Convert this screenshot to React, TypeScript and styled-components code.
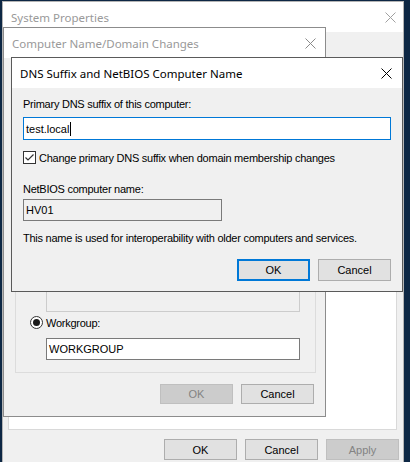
import styled, { createGlobalStyle } from "styled-components";

const GlobalStyle = createGlobalStyle`
  html, body {
    margin: 0;
    padding: 0;
  }
  body {
    font-family: "Liberation Sans", Arial, sans-serif;
    font-size: 11px;
    color: #000;
  }
`

const Desktop = styled.div`
  position: relative;
  width: 410px;
  height: 462px;
  overflow: hidden;
  background: #0d2744;
`

// windows sit on the desktop at their own coordinates
const Window = styled.div<{ $x: number; $y: number; $w: number; $h: number; $border: string }>`
  position: absolute;
  left: ${(p) => p.$x}px;
  top: ${(p) => p.$y}px;
  width: ${(p) => p.$w}px;
  height: ${(p) => p.$h}px;
  box-sizing: border-box;
  border: 1px solid ${(p) => p.$border};
  background: #f0f0f0;
  display: flex;
  flex-direction: column;
`

const TitleBar = styled.div<{ $active?: boolean }>`
  flex: none;
  height: 30px;
  background: #fff;
  display: flex;
  align-items: center;
  justify-content: space-between;
  padding-left: 8px;
  font-family: "Noto Sans", "Open Sans", sans-serif;
  font-size: 11.5px;
  color: ${(p) => (p.$active ? "#000" : "#999")};
`

const CloseBox = styled.div<{ $inset: number }>`
  width: ${(p) => p.$inset * 2}px;
  height: 30px;
  display: flex;
  align-items: center;
  justify-content: center;
`

const Body = styled.div<{ $end?: boolean }>`
  flex: 1;
  display: flex;
  flex-direction: column;
  justify-content: ${(p) => (p.$end ? "flex-end" : "flex-start")};
  min-height: 0;
`

const Label = styled.div<{ $top?: number }>`
  line-height: 13px;
  margin-top: ${(p) => p.$top ?? 0}px;
  letter-spacing: -0.25px;
  white-space: nowrap;
`

const Field = styled.div<{ $w?: number; $h: number; $top?: number; $left?: number; $border: string; $bg: string }>`
  box-sizing: border-box;
  width: ${(p) => (p.$w ? `${p.$w}px` : "auto")};
  height: ${(p) => p.$h}px;
  margin-top: ${(p) => p.$top ?? 0}px;
  margin-left: ${(p) => p.$left ?? 0}px;
  border: 1px solid ${(p) => p.$border};
  background: ${(p) => p.$bg};
  display: flex;
  align-items: center;
  padding: 0 2px;
  font-size: 11px;
`

const Caret = styled.span`
  display: inline-block;
  width: 1px;
  height: 14px;
  background: #000;
  margin-left: 1px;
`

const OptionRow = styled.div<{ $top?: number; $left?: number }>`
  display: flex;
  align-items: center;
  gap: 3px;
  height: 13px;
  margin-top: ${(p) => p.$top ?? 0}px;
  margin-left: ${(p) => p.$left ?? 0}px;
  letter-spacing: -0.25px;
  white-space: nowrap;
`

const ButtonRow = styled.div<{ $top: number; $right: number; $gap: number }>`
  display: flex;
  justify-content: flex-end;
  gap: ${(p) => p.$gap}px;
  margin-top: ${(p) => p.$top}px;
  margin-right: ${(p) => p.$right}px;
`

const Button = styled.button<{ $h: number; $focused?: boolean }>`
  box-sizing: border-box;
  width: 73px;
  height: ${(p) => p.$h}px;
  padding: 0;
  font-family: "Liberation Sans", Arial, sans-serif;
  font-size: 11px;
  color: #000;
  background: #e1e1e1;
  border: ${(p) => (p.$focused ? "2px solid #0078d7" : "1px solid #adadad")};
  border-radius: 0;

  &:disabled {
    color: #838383;
    background: #cccccc;
    border-color: #bfbfbf;
  }
`

const SysPanel = styled.div`
  box-sizing: border-box;
  margin: 25px 6px 0 5px;
  height: 373px;
  background: #fff;
  border: 1px solid #d9d9d9;
`

const GroupBox = styled.div`
  box-sizing: border-box;
  width: 301px;
  margin-left: 11px;
  border: 1px solid #dcdcdc;
  padding: 0 0 12px 0;
  display: flex;
  flex-direction: column;
`

const DialogBody = styled.div`
  padding: 10px 11px 0 11px;
  display: flex;
  flex-direction: column;
`

function CloseIcon({ color, inset }: { color: string; inset: number }) {
  return (
    <CloseBox $inset={inset}>
      <svg width="11" height="11" viewBox="0 0 11 11">
        <path d="M0.5 0.5 L10.5 10.5 M10.5 0.5 L0.5 10.5" stroke={color} strokeWidth="1" fill="none" />
      </svg>
    </CloseBox>
  );
}

function CheckBox() {
  return (
    <svg width="13" height="13" viewBox="0 0 13 13">
      <rect x="0.5" y="0.5" width="12" height="12" fill="#fff" stroke="#333" />
      <path d="M2.5 6.5 L5 9 L10.5 3.5" stroke="#333" strokeWidth="1.2" fill="none" />
    </svg>
  );
}

function Radio({ checked }: { checked?: boolean }) {
  return (
    <svg width="13" height="13" viewBox="0 0 13 13">
      <circle cx="6.5" cy="6.5" r="6" fill="#fff" stroke="#333" />
      {checked && <circle cx="6.5" cy="6.5" r="3.5" fill="#1a1a1a" />}
    </svg>
  );
}

function App() {
  return (
    <>
      <GlobalStyle />
      <Desktop>
        <Window $x={2} $y={1} $w={402} $h={475} $border="#b4b4b4">
          <TitleBar>
            <span>System Properties</span>
            <CloseIcon color="#a0a0a0" inset={13} />
          </TitleBar>
          <Body>
            <SysPanel />
            <ButtonRow $top={9} $right={4} $gap={8}>
              <Button $h={21}>OK</Button>
              <Button $h={21}>Cancel</Button>
              <Button $h={21} disabled>Apply</Button>
            </ButtonRow>
          </Body>
        </Window>

        <Window $x={3} $y={27} $w={323} $h={390} $border="#8c8c8c">
          <TitleBar>
            <span>Computer Name/Domain Changes</span>
            <CloseIcon color="#8a8a8a" inset={15} />
          </TitleBar>
          <Body $end>
            <GroupBox>
              <Label>Member of</Label>
              <OptionRow $top={8} $left={14}>
                <Radio />
                <span>Domain:</span>
              </OptionRow>
              <Field $w={254} $h={24} $top={6} $left={30} $border="#cccccc" $bg="#f0f0f0" />
              <OptionRow $top={4} $left={14}>
                <Radio checked />
                <span>Workgroup:</span>
              </OptionRow>
              <Field $w={254} $h={22} $top={9} $left={30} $border="#7a7a7a" $bg="#fff">
                WORKGROUP
              </Field>
            </GroupBox>
            <ButtonRow $top={11} $right={11} $gap={8}>
              <Button $h={20} disabled>OK</Button>
              <Button $h={20}>Cancel</Button>
            </ButtonRow>
            <div style={{ height: 12 }} />
          </Body>
        </Window>

        <Window $x={11} $y={57} $w={392} $h={235} $border="#5a5a5a">
          <TitleBar $active>
            <span>DNS Suffix and NetBIOS Computer Name</span>
            <CloseIcon color="#000" inset={16} />
          </TitleBar>
          <DialogBody>
            <Label>Primary DNS suffix of this computer:</Label>
            <Field $h={23} $top={6} $border="#0078d7" $bg="#fff">
              test.local
              <Caret />
            </Field>
            <OptionRow $top={11}>
              <CheckBox />
              <span>Change primary DNS suffix when domain membership changes</span>
            </OptionRow>
            <Label $top={19}>NetBIOS computer name:</Label>
            <Field $w={199} $h={22} $top={3} $border="#7a7a7a" $bg="#f0f0f0">
              HV01
            </Field>
            <Label $top={11}>This name is used for interoperability with older computers and services.</Label>
            <ButtonRow $top={14} $right={0} $gap={8}>
              <Button $h={22} $focused>OK</Button>
              <Button $h={22}>Cancel</Button>
            </ButtonRow>
          </DialogBody>
        </Window>
      </Desktop>
    </>
  );
}

export default App;
